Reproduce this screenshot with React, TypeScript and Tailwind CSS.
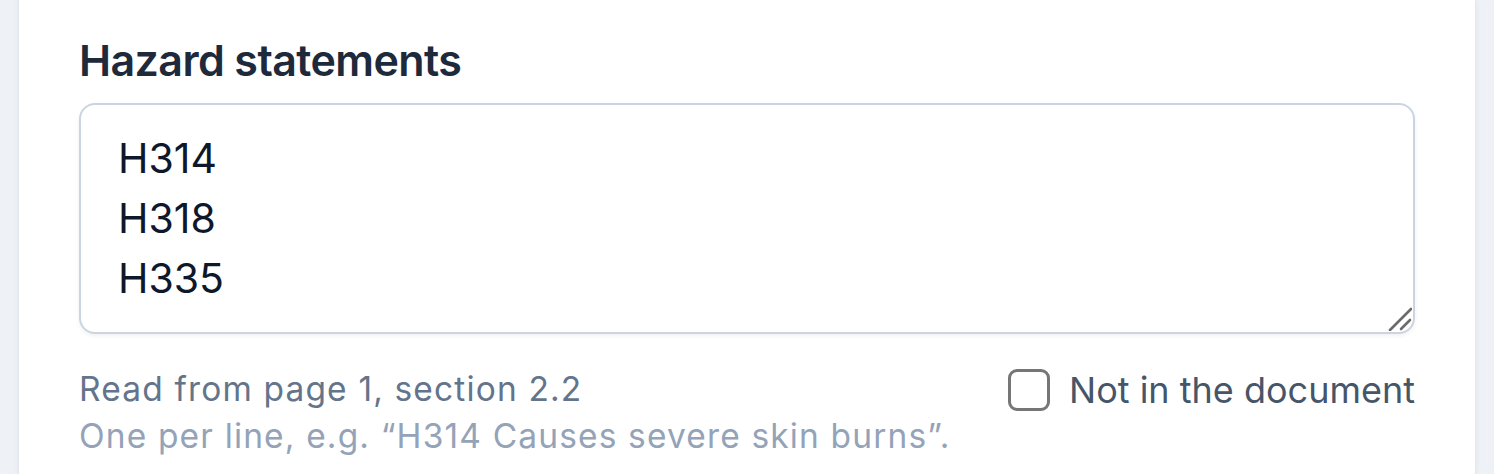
import { useState } from "react";

const font = { fontFamily: "Inter, 'Noto Sans', sans-serif" };

function ResizeGrip() {
  return (
    <svg
      className="pointer-events-none absolute bottom-[3px] right-[3px] h-[24px] w-[24px]"
      viewBox="0 0 24 24"
      fill="none"
    >
      <path d="M2 23 L23 2" stroke="#6b6b6b" strokeWidth="2.6" strokeLinecap="round" />
      <path d="M13 22 L22 13" stroke="#6b6b6b" strokeWidth="2.6" strokeLinecap="round" />
    </svg>
  );
}

export default function App() {
  const [value, setValue] = useState("H314\nH318\nH335");
  const [missing, setMissing] = useState(false);

  return (
    <div style={font} className="h-[474px] overflow-hidden bg-[#eef2f7] px-[18px]">
      <div className="h-full border-x border-[#e3e8ef] bg-white px-[60px] pt-[29px] shadow-[0_0_6px_rgba(15,23,42,0.06)]">
        <label
          htmlFor="hazards"
          className="block text-[43px] font-semibold leading-[63px] tracking-[-0.6px] text-[#1e293b]"
        >
          Hazard statements
        </label>

        <div className="relative mt-[11px]">
          <textarea
            id="hazards"
            value={value}
            onChange={(e) => setValue(e.target.value)}
            className="block h-[231px] w-full resize-none rounded-[16px] border-2 border-[#cbd5e1] bg-white pl-[37px] pr-6 pt-[23px] text-[41px] leading-[60px] text-[#0f172a] shadow-[0_2px_4px_rgba(15,23,42,0.06)] outline-none"
          />
          <ResizeGrip />
        </div>

        <div className="mt-[32px] flex items-start justify-between">
          <div className="text-[33.5px] leading-[47px] tracking-[1.15px]">
            <p className="text-[#64748b]">Read from page 1, section 2.2</p>
            <p className="text-[#94a3b8]">One per line, e.g. “H314 Causes severe skin burns”.</p>
          </div>
          <label className="flex h-[47px] cursor-pointer items-center gap-[19px]">
            <input
              type="checkbox"
              checked={missing}
              onChange={(e) => setMissing(e.target.checked)}
              className="peer sr-only"
            />
            <span className="h-[42px] w-[42px] rounded-[9px] border-[3px] border-[#767676] bg-white peer-checked:bg-[#2563eb]" />
            <span className="text-[36px] text-[#475569]">Not in the document</span>
          </label>
        </div>
      </div>
    </div>
  );
}
